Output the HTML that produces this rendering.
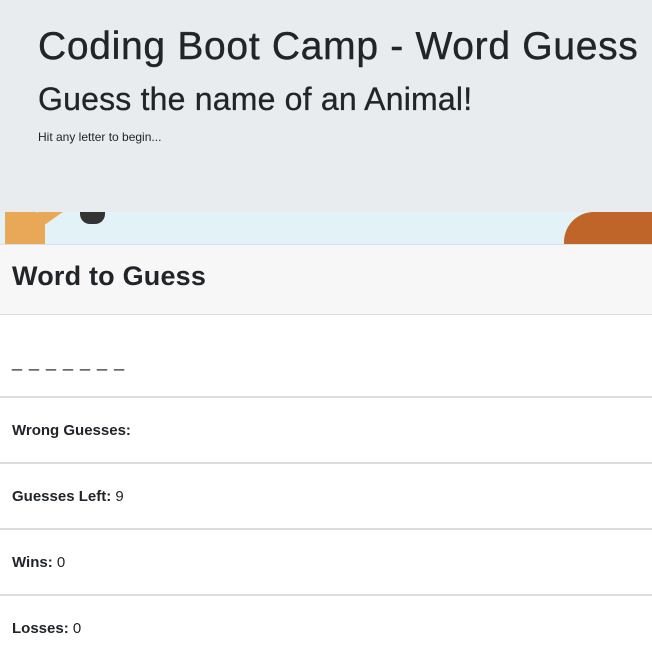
<!DOCTYPE html>
<html><head><style>
body{margin:0;width:652px;height:654px;overflow:hidden;font-family:"Liberation Sans",sans-serif;color:#212529;background:#fff}
.j{background:#e9ecef;height:212px;position:relative}
.j h1{position:absolute;left:38px;top:25px;margin:0;font-size:39px;font-weight:normal;white-space:nowrap;letter-spacing:0.7px;-webkit-text-stroke:0.4px #212529}
.j h2{position:absolute;left:38px;top:81px;margin:0;font-size:32px;font-weight:normal;white-space:nowrap;letter-spacing:0.2px;-webkit-text-stroke:0.3px #212529}
.j p{position:absolute;left:38px;top:130px;margin:0;font-size:12px}
.img{height:32px;background:#e2f2f7;position:relative;overflow:hidden;border-bottom:1px solid #d8e2e6}
.ch{height:69px;background:#f7f7f7;border-bottom:1px solid #ddd;position:relative}
.ch h3{position:absolute;left:12px;top:16px;margin:0;font-size:27px;font-weight:bold;letter-spacing:0.2px}
.row{border-bottom:2px solid #ddd;position:relative;height:64px;font-size:15px}
.row span{position:absolute;left:12px;top:24px}
</style></head><body>
<div class="j">
<h1>Coding Boot Camp - Word Guess</h1>
<h2>Guess the name of an Animal!</h2>
<p>Hit any letter to begin...</p>
</div>
<div class="img">
<div style="position:absolute;left:5px;top:0;width:40px;height:32px;background:#e8a858;border-radius:0 10px 0 0"></div>
<div style="position:absolute;left:30px;top:-10px;width:50px;height:14px;background:#e8a858;transform:rotate(-35deg)"></div>
<div style="position:absolute;left:80px;top:0;width:25px;height:12px;background:#333;border-radius:0 0 10px 10px"></div>
<div style="position:absolute;left:564px;top:0;width:100px;height:40px;background:#c0652a;border-radius:30px 0 0 0"></div>
</div>
<div class="ch"><h3>Word to Guess</h3></div>
<div class="row" style="height:81px"><span style="top:36px;font-size:18px;letter-spacing:1px">_ _ _ _ _ _ _</span></div>
<div class="row"><span><b>Wrong Guesses:</b></span></div>
<div class="row"><span><b>Guesses Left:</b> 9</span></div>
<div class="row"><span><b>Wins:</b> 0</span></div>
<div class="row" style="border:0"><span><b>Losses:</b> 0</span></div>
</body></html>
